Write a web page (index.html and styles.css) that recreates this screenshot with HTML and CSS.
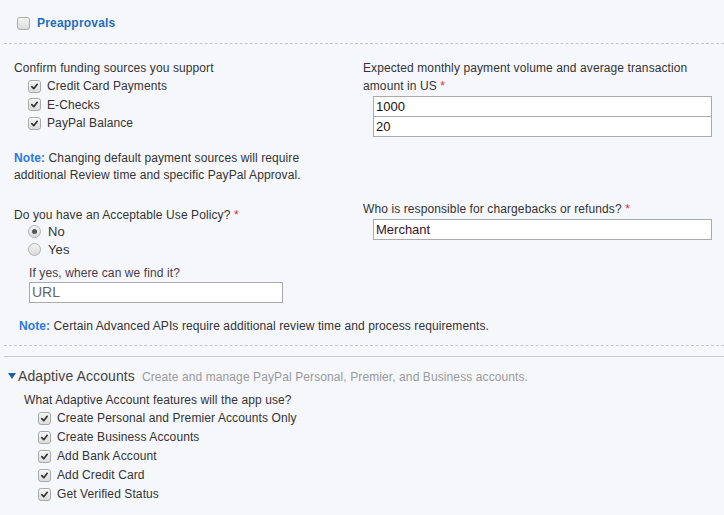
FILE: index.html
```html
<!DOCTYPE html>
<html>
<head>
<meta charset="utf-8">
<link rel="stylesheet" href="styles.css">
</head>
<body>
<div class="page">
  <div class="pre-head">
    <span class="cb"></span>
    <span class="pre-title">Preapprovals</span>
  </div>
  <div class="dash"></div>

  <div class="row row-funding">
    <div class="col">
      <div class="label">Confirm funding sources you support</div>
      <ul class="checks">
        <li><span class="cb on"><svg viewBox="0 0 10 10"><path d="M2 5.2 L4.2 7.4 L8 2.6" /></svg></span>Credit Card Payments</li>
        <li><span class="cb on"><svg viewBox="0 0 10 10"><path d="M2 5.2 L4.2 7.4 L8 2.6" /></svg></span>E-Checks</li>
        <li><span class="cb on"><svg viewBox="0 0 10 10"><path d="M2 5.2 L4.2 7.4 L8 2.6" /></svg></span>PayPal Balance</li>
      </ul>
      <p class="note"><b>Note:</b> Changing default payment sources will require additional Review time and specific PayPal Approval.</p>
    </div>
    <div class="col">
      <div class="label">Expected monthly payment volume and average transaction amount in US <span class="req">*</span></div>
      <div class="inputs">
        <div class="field">1000</div>
        <div class="field">20</div>
      </div>
    </div>
  </div>

  <div class="row row-policy">
    <div class="col">
      <div class="label">Do you have an Acceptable Use Policy? <span class="req">*</span></div>
      <ul class="radios">
        <li><span class="rb on"></span>No</li>
        <li><span class="rb"></span>Yes</li>
      </ul>
      <div class="sub-label">If yes, where can we find it?</div>
      <div class="field url">URL</div>
    </div>
    <div class="col col-who">
      <div class="label">Who is responsible for chargebacks or refunds? <span class="req">*</span></div>
      <div class="inputs">
        <div class="field merchant">Merchant</div>
      </div>
    </div>
  </div>

  <p class="note note-api"><b>Note:</b> Certain Advanced APIs require additional review time and process requirements.</p>

  <div class="dash dash-bottom"></div>
  <div class="solid"></div>

  <div class="adaptive">
    <div class="ad-head">
      <span class="tri"></span>
      <span class="ad-title">Adaptive Accounts</span>
      <span class="ad-sub">Create and manage PayPal Personal, Premier, and Business accounts.</span>
    </div>
    <div class="ad-body">
      <div class="label">What Adaptive Account features will the app use?</div>
      <ul class="checks checks-ad">
        <li><span class="cb on"><svg viewBox="0 0 10 10"><path d="M2 5.2 L4.2 7.4 L8 2.6" /></svg></span>Create Personal and Premier Accounts Only</li>
        <li><span class="cb on"><svg viewBox="0 0 10 10"><path d="M2 5.2 L4.2 7.4 L8 2.6" /></svg></span>Create Business Accounts</li>
        <li><span class="cb on"><svg viewBox="0 0 10 10"><path d="M2 5.2 L4.2 7.4 L8 2.6" /></svg></span>Add Bank Account</li>
        <li><span class="cb on"><svg viewBox="0 0 10 10"><path d="M2 5.2 L4.2 7.4 L8 2.6" /></svg></span>Add Credit Card</li>
        <li><span class="cb on"><svg viewBox="0 0 10 10"><path d="M2 5.2 L4.2 7.4 L8 2.6" /></svg></span>Get Verified Status</li>
      </ul>
    </div>
  </div>
</div>
</body>
</html>
```
FILE: styles.css
```css
html, body {
  margin: 0;
  padding: 0;
  background: #f6f7fb;
}

body {
  font-family: "Liberation Sans", Arial, sans-serif;
  font-size: 12px;
  letter-spacing: 0.1px;
  color: #333;
  line-height: 18px;
}

.page {
  width: 724px;
  height: 515px;
  overflow: hidden;
}

ul {
  list-style: none;
  margin: 0;
  padding: 0;
}

p {
  margin: 0;
}

/* checkbox / radio drawn as spans */
.cb {
  display: inline-flex;
  align-items: center;
  justify-content: center;
  box-sizing: border-box;
  width: 13px;
  height: 13px;
  border: 1px solid #a9a9a9;
  border-radius: 3px;
  background: linear-gradient(#f4f4f4, #dcdcdc);
  box-shadow: inset 0 1px 0 #fff;
  vertical-align: middle;
}

.cb svg {
  width: 9px;
  height: 9px;
}

.cb svg path {
  fill: none;
  stroke: #333;
  stroke-width: 1.9;
  stroke-linecap: round;
  stroke-linejoin: round;
}

.rb {
  display: inline-block;
  box-sizing: border-box;
  width: 13px;
  height: 13px;
  border: 1px solid #b3b3b3;
  border-radius: 50%;
  background: linear-gradient(#f4f4f4, #dadada);
  position: relative;
  vertical-align: middle;
}

.rb.on::after {
  content: "";
  position: absolute;
  left: 3px;
  top: 3px;
  width: 5px;
  height: 5px;
  border-radius: 50%;
  background: #555;
}

/* preapprovals header */
.pre-head {
  display: flex;
  align-items: center;
  gap: 7px;
  padding: 14px 0 0 17px;
  height: 18px;
}

.pre-title {
  font-weight: bold;
  font-size: 12px;
  letter-spacing: 0.2px;
  color: #1f6ebf;
}

.dash {
  margin: 11px 0 0 4px;
  border-top: 1px dashed #c8c8c8;
}

/* two-column form rows */
.row {
  display: grid;
  grid-template-columns: 349px 1fr;
  padding: 0 12px 0 14px;
}

.row-funding {
  margin-top: 15px;
}

.req {
  color: #e2292f;
}

.checks {
  margin-left: 14px;
}

.checks li {
  display: flex;
  align-items: center;
  gap: 6px;
  height: 18.5px;
}

.note {
  margin-top: 17px;
  line-height: 17px;
  width: 300px;
}

.note b {
  color: #2a78e0;
}

.inputs {
  margin: 1px 0 0 10px;
  display: flex;
  flex-direction: column;
}

.field {
  box-sizing: border-box;
  height: 21px;
  background: #fff;
  border: 1px solid #aaa;
  padding: 0 2px;
  font-size: 13px;
  letter-spacing: 0;
  line-height: 19px;
  color: #111;
}

.field + .field {
  margin-top: -1px;
}

.row-policy {
  margin-top: 22px;
}

.col-who {
  margin-top: -6px;
}

.radios {
  margin-left: 14px;
  margin-top: -1px;
}

.radios li {
  display: flex;
  align-items: center;
  gap: 7px;
  height: 18px;
  font-size: 13px;
}

.sub-label {
  margin: 5px 0 0 15px;
  color: #4a3b4a;
}

.field.url {
  margin: 0 0 0 15px;
  width: 254px;
  font-size: 14px;
  color: #666;
  padding-left: 2px;
}

.field.merchant {
  color: #3a0f2a;
}

.note-api {
  width: auto;
  margin: 15px 0 0 19px;
}

.dash-bottom {
  margin-top: 10px;
}

.solid {
  margin: 10px 0 0 4px;
  border-top: 1px solid #c9c9c9;
}

/* adaptive accounts section */
.adaptive {
  padding-top: 10px;
}

.ad-head {
  display: flex;
  align-items: baseline;
  padding-left: 8px;
  height: 20px;
}

.tri {
  width: 0;
  height: 0;
  border-left: 4.5px solid transparent;
  border-right: 4.5px solid transparent;
  border-top: 6px solid #1f5fa8;
  margin-right: 2px;
  align-self: center;
  margin-top: -2px;
}

.ad-title {
  font-size: 14px;
  letter-spacing: 0.1px;
  color: #444;
  margin-right: 7px;
}

.ad-sub {
  font-size: 12px;
  letter-spacing: 0.1px;
  color: #9a9a9a;
}

.ad-body {
  padding: 4px 0 0 24px;
}

.checks-ad li {
  height: 19px;
}
```
